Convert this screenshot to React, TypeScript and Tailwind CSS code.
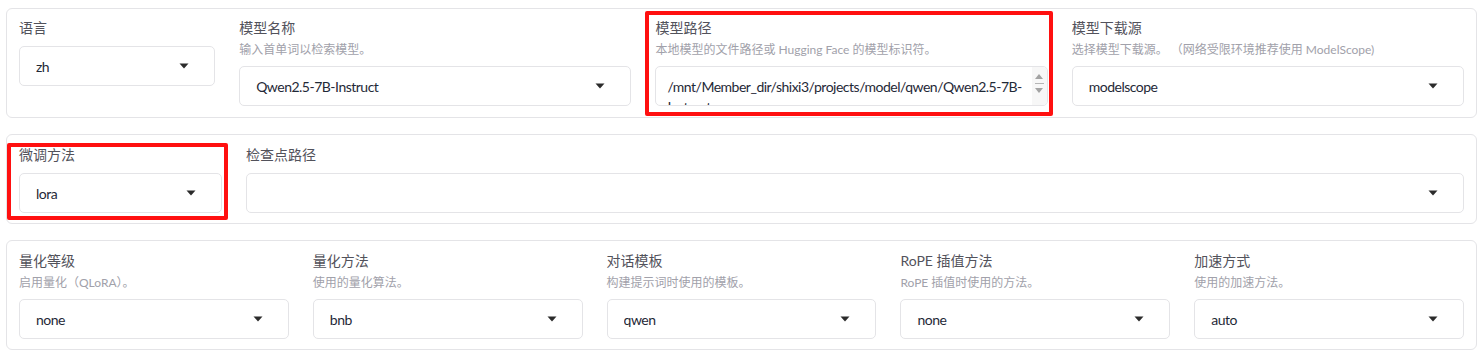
import type { ReactNode } from 'react'

const font = { fontFamily: 'Lato, "Noto Sans CJK SC", sans-serif' }

function Caret() {
  return (
    <svg width="10" height="6" viewBox="0 0 10 6" className="shrink-0">
      <path d="M0.5 0.5 H9.5 L5 5.5 Z" fill="#2b2b2b" />
    </svg>
  )
}

function Select({ value }: { value: string }) {
  return (
    <div className="h-[40px] border border-[#e4e4e7] rounded-[5px] bg-white flex items-center pl-[16px] pr-[25px]">
      <span className="flex-1 text-[14px] tracking-[-0.5px] text-[#1f2937] truncate">{value}</span>
      <Caret />
    </div>
  )
}

function Field({
  label,
  desc,
  grow,
  children,
  mark,
}: {
  label: string
  desc?: string
  grow: string
  children: ReactNode
  mark?: ReactNode
}) {
  return (
    <div className={`relative flex flex-col min-w-0 basis-0 ${grow}`}>
      <div className="text-[14px] leading-[20px] text-[#52525b]">{label}</div>
      {desc && <div className="mt-[3px] text-[12px] leading-[18px] text-[#a1a1aa] whitespace-nowrap">{desc}</div>}
      <div className={desc ? 'mt-[7px]' : 'mt-[8px]'}>{children}</div>
      {mark}
    </div>
  )
}

function PathBox() {
  return (
    <div className="h-[40px] border border-[#e4e4e7] rounded-[5px] bg-white flex overflow-hidden">
      <div className="flex-1 min-w-0 overflow-hidden pl-[11px] pt-[10px] text-[14px] leading-[20px] tracking-[-0.5px] text-[#1f2937] whitespace-nowrap">
        <div>/mnt/Member_dir/shixi3/projects/model/qwen/Qwen2.5-7B-</div>
        <div>Instruct</div>
      </div>
      <div className="w-[15px] shrink-0 bg-[#f7f7f7] flex flex-col items-center pt-[7px]">
        <svg width="8" height="5" viewBox="0 0 8 5">
          <path d="M0 5 L4 0 L8 5 Z" fill="#a3a3a3" />
        </svg>
        <div className="mt-[4px] w-[9px] h-[1px] bg-[#b5b5b5]" />
        <svg width="8" height="5" viewBox="0 0 8 5" className="mt-[4px]">
          <path d="M0 0 L8 0 L4 5 Z" fill="#a3a3a3" />
        </svg>
      </div>
    </div>
  )
}

function Panel({ children, className }: { children: ReactNode; className: string }) {
  return (
    <div className={`border border-[#e4e4e7] rounded-[6px] px-[12px] flex gap-[24px] items-start ${className}`}>
      {children}
    </div>
  )
}

export default function App() {
  return (
    <div className="bg-white w-[1483px] h-[360px] px-[6px] pt-[8px] flex flex-col" style={font}>
      <Panel className="pt-[9px] pb-[11px]">
        <Field label="语言" grow="grow">
          <Select value="zh" />
        </Field>
        <Field label="模型名称" desc="输入首单词以检索模型。" grow="grow-[2]">
          <Select value="Qwen2.5-7B-Instruct" />
        </Field>
        <Field
          label="模型路径"
          desc="本地模型的文件路径或 Hugging Face 的模型标识符。"
          grow="grow-[2]"
          mark={<div className="absolute -left-[10px] -right-[5px] -top-[7px] -bottom-[10px] border-4 border-[#ff1010] rounded-[2px] pointer-events-none" />}
        >
          <PathBox />
        </Field>
        <Field label="模型下载源" desc="选择模型下载源。 （网络受限环境推荐使用 ModelScope)" grow="grow-[2]">
          <Select value="modelscope" />
        </Field>
      </Panel>

      <Panel className="mt-[16px] pt-[10px] pb-[10px]">
        <Field
          label="微调方法"
          grow="grow"
          mark={<div className="absolute -left-[12px] -right-[6px] -top-[2px] -bottom-[7px] border-4 border-[#ff1010] rounded-[2px] pointer-events-none" />}
        >
          <Select value="lora" />
        </Field>
        <Field label="检查点路径" grow="grow-[6]">
          <Select value="" />
        </Field>
      </Panel>

      <Panel className="mt-[16px] pt-[10px] pb-[10px]">
        <Field label="量化等级" desc="启用量化（QLoRA）。" grow="grow">
          <Select value="none" />
        </Field>
        <Field label="量化方法" desc="使用的量化算法。" grow="grow">
          <Select value="bnb" />
        </Field>
        <Field label="对话模板" desc="构建提示词时使用的模板。" grow="grow">
          <Select value="qwen" />
        </Field>
        <Field label="RoPE 插值方法" desc="RoPE 插值时使用的方法。" grow="grow">
          <Select value="none" />
        </Field>
        <Field label="加速方式" desc="使用的加速方法。" grow="grow">
          <Select value="auto" />
        </Field>
      </Panel>
    </div>
  )
}
